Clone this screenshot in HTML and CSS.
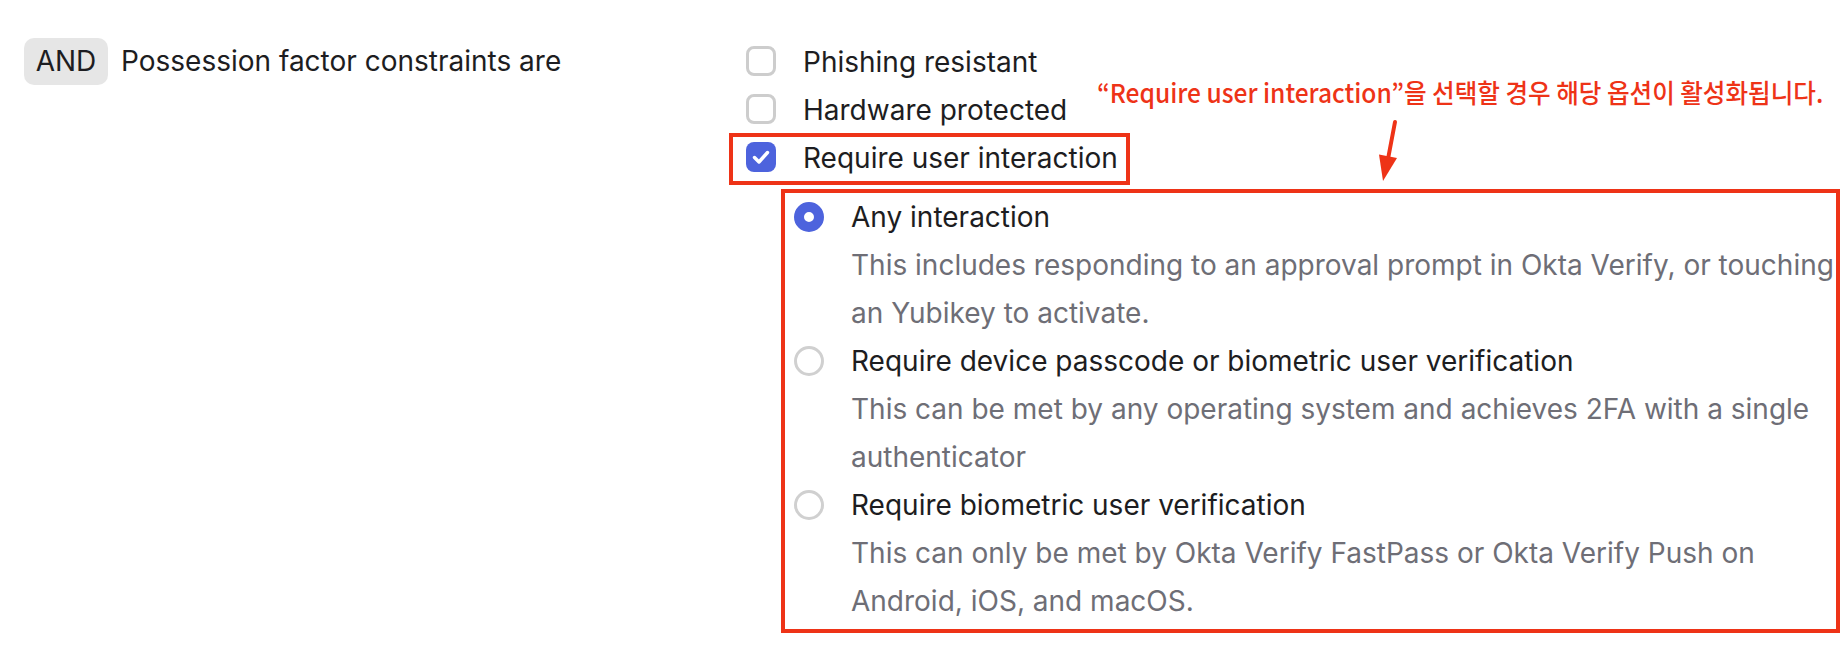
FILE: index.html
```html
<!DOCTYPE html>
<html lang="en">
<head>
<meta charset="utf-8">
<title>Possession factor constraints</title>
<link rel="stylesheet" href="styles.css">
</head>
<body>
<div class="rule">
  <div class="cond">
    <span class="badge">AND</span>
    <span class="label">Possession factor constraints are</span>
  </div>
  <div class="options">
    <div class="check-row">
      <span class="checkbox"></span>
      <span class="check-text">Phishing resistant</span>
    </div>
    <div class="check-row">
      <span class="checkbox"></span>
      <span class="check-text">Hardware protected</span>
    </div>
    <div class="check-row highlight">
      <span class="checkbox checked">
        <svg viewBox="0 0 30 30" width="30" height="30"><path d="M8.5 15.5 L13 20 L21.5 10.5" fill="none" stroke="#fff" stroke-width="3.4" stroke-linecap="round" stroke-linejoin="round"/></svg>
      </span>
      <span class="check-text">Require user interaction</span>
    </div>
    <div class="radio-group">
      <div class="radio-opt">
        <span class="radio checked"></span>
        <div class="radio-text">
          <div class="radio-title">Any interaction</div>
          <div class="radio-desc">This includes responding to an approval prompt in Okta Verify, or touching an Yubikey to activate.</div>
        </div>
      </div>
      <div class="radio-opt">
        <span class="radio"></span>
        <div class="radio-text">
          <div class="radio-title">Require device passcode or biometric user verification</div>
          <div class="radio-desc">This can be met by any operating system and achieves 2FA with a single authenticator</div>
        </div>
      </div>
      <div class="radio-opt">
        <span class="radio"></span>
        <div class="radio-text">
          <div class="radio-title">Require biometric user verification</div>
          <div class="radio-desc">This can only be met by Okta Verify FastPass or Okta Verify Push on Android, iOS, and macOS.</div>
        </div>
      </div>
    </div>
  </div>
  <div class="note">“Require user interaction”을 선택할 경우 해당 옵션이 활성화됩니다.</div>
  <svg class="note-arrow" viewBox="0 0 35 75" width="35" height="75">
    <line x1="25" y1="7" x2="18" y2="44" stroke="#ee3317" stroke-width="4" stroke-linecap="round"/>
    <polygon points="13,66 27,43 9,39.5" fill="#ee3317"/>
  </svg>
</div>
</body>
</html>
```
FILE: styles.css
```css
* { box-sizing: border-box; }

html, body {
  margin: 0;
  padding: 0;
  background: #ffffff;
}

body {
  font-family: Inter, "Noto Sans", "Liberation Sans", sans-serif;
  font-size: 28px;
  line-height: 48px;
  color: #1d1d21;
}

.rule {
  position: relative;
  display: flex;
  align-items: flex-start;
  padding: 37px 0 0 24px;
  height: 662px;
}

.cond {
  width: 722px;
  display: flex;
  align-items: center;
  gap: 13px;
  flex-shrink: 0;
}

.badge {
  display: inline-block;
  height: 47px;
  line-height: 47px;
  width: 84px;
  text-align: center;
  background: #e6e6e6;
  border-radius: 10px;
  color: #1d1d21;
}

.label {
  color: #1d1d21;
}

.options {
  margin-top: 1px;
}

.check-row {
  display: flex;
  align-items: center;
  height: 48px;
  width: fit-content;
}

.checkbox {
  width: 30px;
  height: 30px;
  border: 3px solid #cdcdcd;
  border-radius: 8px;
  background: #fff;
  margin-right: 27px;
  margin-top: -3px;
  flex-shrink: 0;
  display: flex;
}

.checkbox.checked {
  border: none;
  background: #4d63dd;
}

.highlight {
  position: relative;
}

.highlight::after {
  content: "";
  position: absolute;
  top: -1px;
  bottom: -3px;
  left: -17px;
  right: -12px;
  border: 4px solid #ee3317;
}

.radio-group {
  margin: 7px 0 0 35px;
  width: 1059px;
  border: 4px solid #ee3317;
  padding: 0 0 4px 9px;
}

.radio-opt {
  display: flex;
  align-items: flex-start;
}

.radio {
  width: 30px;
  height: 30px;
  border-radius: 50%;
  border: 3px solid #d0d0d0;
  background: #fff;
  margin: 9px 27px 0 0;
  flex-shrink: 0;
}

.radio.checked {
  border: 10px solid #4d63dd;
}

.radio-text {
  flex: 1;
}

.radio-title {
  color: #1d1d21;
}

.radio-desc {
  color: #6e6e76;
}

.note {
  position: absolute;
  left: 1097px;
  top: 76px;
  font-family: "Noto Sans CJK KR", "Noto Sans", sans-serif;
  font-size: 26px;
  line-height: 32px;
  font-weight: 500;
  color: #ee3317;
  white-space: nowrap;
  transform: scaleX(0.945);
  transform-origin: left top;
}

.note-arrow {
  position: absolute;
  left: 1370px;
  top: 115px;
}
```
